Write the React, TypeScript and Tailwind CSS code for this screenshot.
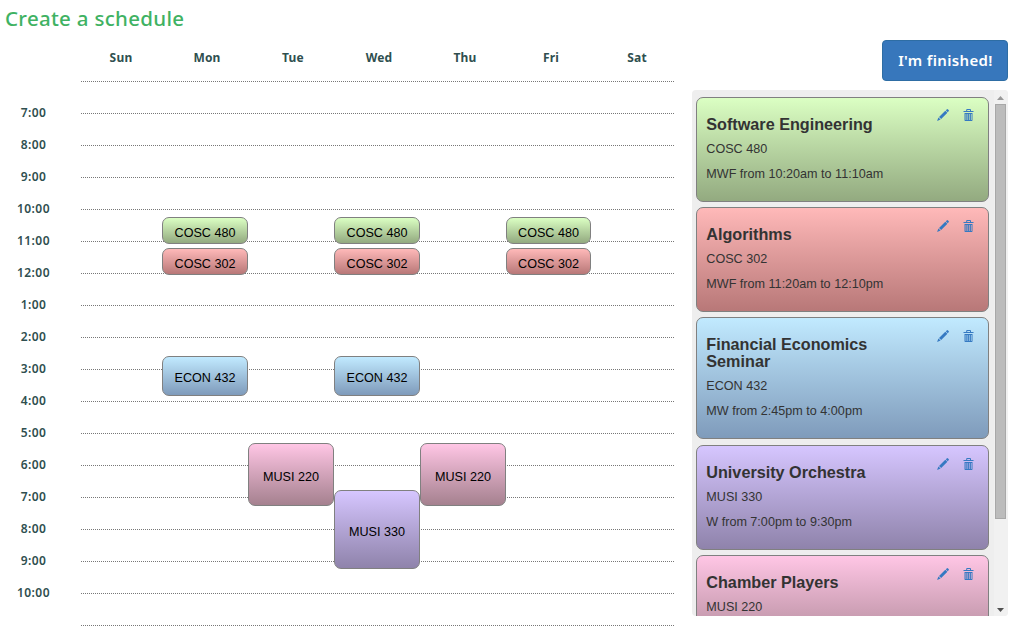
import React from "react";

type Tone = "green" | "red" | "blue" | "violet" | "pink";

const tones: Record<Tone, string> = {
  green: "from-[#dbffc3] to-[#93aa80]",
  red: "from-[#ffb9b9] to-[#b87878]",
  blue: "from-[#c1eaff] to-[#7f9bbb]",
  violet: "from-[#d6c6ff] to-[#8f83ab]",
  pink: "from-[#ffc6e5] to-[#a5818f]",
};

const days = ["Sun", "Mon", "Tue", "Wed", "Thu", "Fri", "Sat"];

const hours = [
  "7:00", "8:00", "9:00", "10:00", "11:00", "12:00", "1:00", "2:00",
  "3:00", "4:00", "5:00", "6:00", "7:00", "8:00", "9:00", "10:00",
];

const meetings: { label: string; tone: Tone; place: string }[] = [
  { label: "COSC 480", tone: "green", place: "left-[81px] top-[136px] h-[27px] w-[86px]" },
  { label: "COSC 480", tone: "green", place: "left-[253px] top-[136px] h-[27px] w-[86px]" },
  { label: "COSC 480", tone: "green", place: "left-[425px] top-[136px] h-[27px] w-[85px]" },
  { label: "COSC 302", tone: "red", place: "left-[81px] top-[167px] h-[27px] w-[86px]" },
  { label: "COSC 302", tone: "red", place: "left-[253px] top-[167px] h-[27px] w-[86px]" },
  { label: "COSC 302", tone: "red", place: "left-[425px] top-[167px] h-[27px] w-[85px]" },
  { label: "ECON 432", tone: "blue", place: "left-[81px] top-[275px] h-[40px] w-[86px]" },
  { label: "ECON 432", tone: "blue", place: "left-[253px] top-[275px] h-[40px] w-[86px]" },
  { label: "MUSI 220", tone: "pink", place: "left-[167px] top-[362px] h-[63px] w-[86px]" },
  { label: "MUSI 220", tone: "pink", place: "left-[339px] top-[362px] h-[63px] w-[86px]" },
  { label: "MUSI 330", tone: "violet", place: "left-[253px] top-[409px] h-[79px] w-[86px]" },
];

const courses: { title: string; code: string; time?: string; tone: Tone; size: string; tools: string }[] = [
  { title: "Software Engineering", code: "COSC 480", time: "MWF from 10:20am to 11:10am", tone: "green", size: "h-[105px] mb-[5px]", tools: "pt-[11px]" },
  { title: "Algorithms", code: "COSC 302", time: "MWF from 11:20am to 12:10pm", tone: "red", size: "h-[105px] mb-[5px]", tools: "pt-[12px]" },
  { title: "Financial Economics Seminar", code: "ECON 432", time: "MW from 2:45pm to 4:00pm", tone: "blue", size: "h-[122px] mb-[6px]", tools: "pt-[12px]" },
  { title: "University Orchestra", code: "MUSI 330", time: "W from 7:00pm to 9:30pm", tone: "violet", size: "h-[105px] mb-[5px]", tools: "pt-[12px]" },
  { title: "Chamber Players", code: "MUSI 220", tone: "pink", size: "h-[105px]", tools: "pt-[12px]" },
];

function Pencil() {
  return (
    <svg width="12" height="12" viewBox="0 0 12 12" fill="#3579c2" aria-hidden="true">
      <path d="M8.800 1.300 9.700.4q.7-.6 1.300 0l.6.6q.6.6 0 1.300L10.700 3.200zM8.300 1.700l2.100 2.100-6.200 6.300L2 7.900zM1.400 8.400l2.200 2.200L.1 11.900z" />
    </svg>
  );
}

function Trash() {
  return (
    <svg width="12" height="13" viewBox="0 0 12 13" fill="#3579c2" aria-hidden="true">
      <path fillRule="evenodd" d="M.5 2h2.700V.9Q3.200 0 4.100 0h3Q8 0 8 .9V2h2.500v1H.5zM4.200 1v1H7V1z" />
      <path fillRule="evenodd" d="M1.500 4h8v7.200q0 .8-.8.8H2.300q-.8 0-.8-.8zM2.600 5v6h.7V5zM4.500 5v6h.6V5zM6.200 5v6h.6V5zM7.900 5v6h.7V5z" />
    </svg>
  );
}

export default function App() {
  return (
    <div className="flex h-[634px] w-[1015px] overflow-hidden bg-white font-['Liberation_Sans',sans-serif]">
      <main className="w-[692px] shrink-0">
        <h1 className="h-[45px] pl-[5px] pt-[3px] font-['Noto_Sans','Open_Sans',sans-serif] text-[20.5px] font-medium leading-[31px] tracking-[0.3px] text-[#3fb263]">
          Create a schedule
        </h1>
        <div className="ml-[78px] grid h-[36px] w-[602px] grid-cols-7 font-['Noto_Sans','Open_Sans',sans-serif] text-[12px] font-bold leading-[25px] tracking-[0.2px] text-[#2f4f4f]">
          {days.map((d) => (
            <div key={d} className="text-center">{d}</div>
          ))}
        </div>
        <div className="flex">
          <div className="w-[81px] pt-[16px] font-['Noto_Sans','Open_Sans',sans-serif] text-[12px] font-semibold tracking-[0.45px] text-[#2f4f4f]">
            {hours.map((h, i) => (
              <div key={i} className="h-8 w-[67px] text-center leading-[31px]">{h}</div>
            ))}
          </div>
          <div className="relative w-[593px]">
            {Array.from({ length: 18 }, (_, i) => (
              <div key={i} className="h-8 border-t border-dotted border-[#777]" />
            ))}
            {meetings.map((m, i) => (
              <div
                key={i}
                className={`absolute flex items-center justify-center rounded-[7px] border border-[#808080] bg-linear-to-b pt-[5px] text-[12.6px] text-black ${tones[m.tone]} ${m.place}`}
              >
                {m.label}
              </div>
            ))}
          </div>
        </div>
      </main>

      <aside className="w-[316px] shrink-0 pt-[40px]">
        <div className="flex h-[50px] justify-end">
          <button className="h-[41px] w-[126px] rounded-[4px] border border-[#2e6da4] bg-[#3777bc] pl-px font-['Noto_Sans','Open_Sans',sans-serif] text-[15px] font-semibold tracking-[0.35px] text-white">
            I'm finished!
          </button>
        </div>
        <div className="flex h-[526px] overflow-hidden rounded-[4px] bg-[#eee]">
          <div className="w-[302px] pl-[4px] pt-[7px]">
            {courses.map((c) => (
              <article
                key={c.title}
                className={`flex w-[293px] justify-between rounded-[7px] border border-[#808080] bg-linear-to-b pl-[9.300px] pr-[13px] text-[#333] ${tones[c.tone]} ${c.size}`}
              >
                <div className="w-[190px] pt-[18px]">
                  <h2 className="text-[16.2px] font-bold leading-[17px]">{c.title}</h2>
                  <p className="mt-[7px] text-[12.6px] leading-[18px]">{c.code}</p>
                  {c.time && <p className="mt-[7px] text-[12.6px] leading-[18px]">{c.time}</p>}
                </div>
                <div className={`flex gap-[14px] ${c.tools}`}>
                  <Pencil />
                  <Trash />
                </div>
              </article>
            ))}
          </div>
          <div className="flex w-[14px] flex-col items-center bg-[#f1f1f1]">
            <svg width="14" height="14" viewBox="0 0 14 14" className="shrink-0">
              <path d="M3 10 6.500 6 10 10z" fill="#999" />
            </svg>
            <div className="mr-px h-[415px] w-[11px] shrink-0 border border-[#a8a8a8] bg-[#bcbcbc]" />
            <svg width="14" height="14" viewBox="0 0 14 14" className="mt-auto shrink-0">
              <path d="M3 6 6.500 10 10 6z" fill="#505050" />
            </svg>
          </div>
        </div>
      </aside>
    </div>
  );
}
